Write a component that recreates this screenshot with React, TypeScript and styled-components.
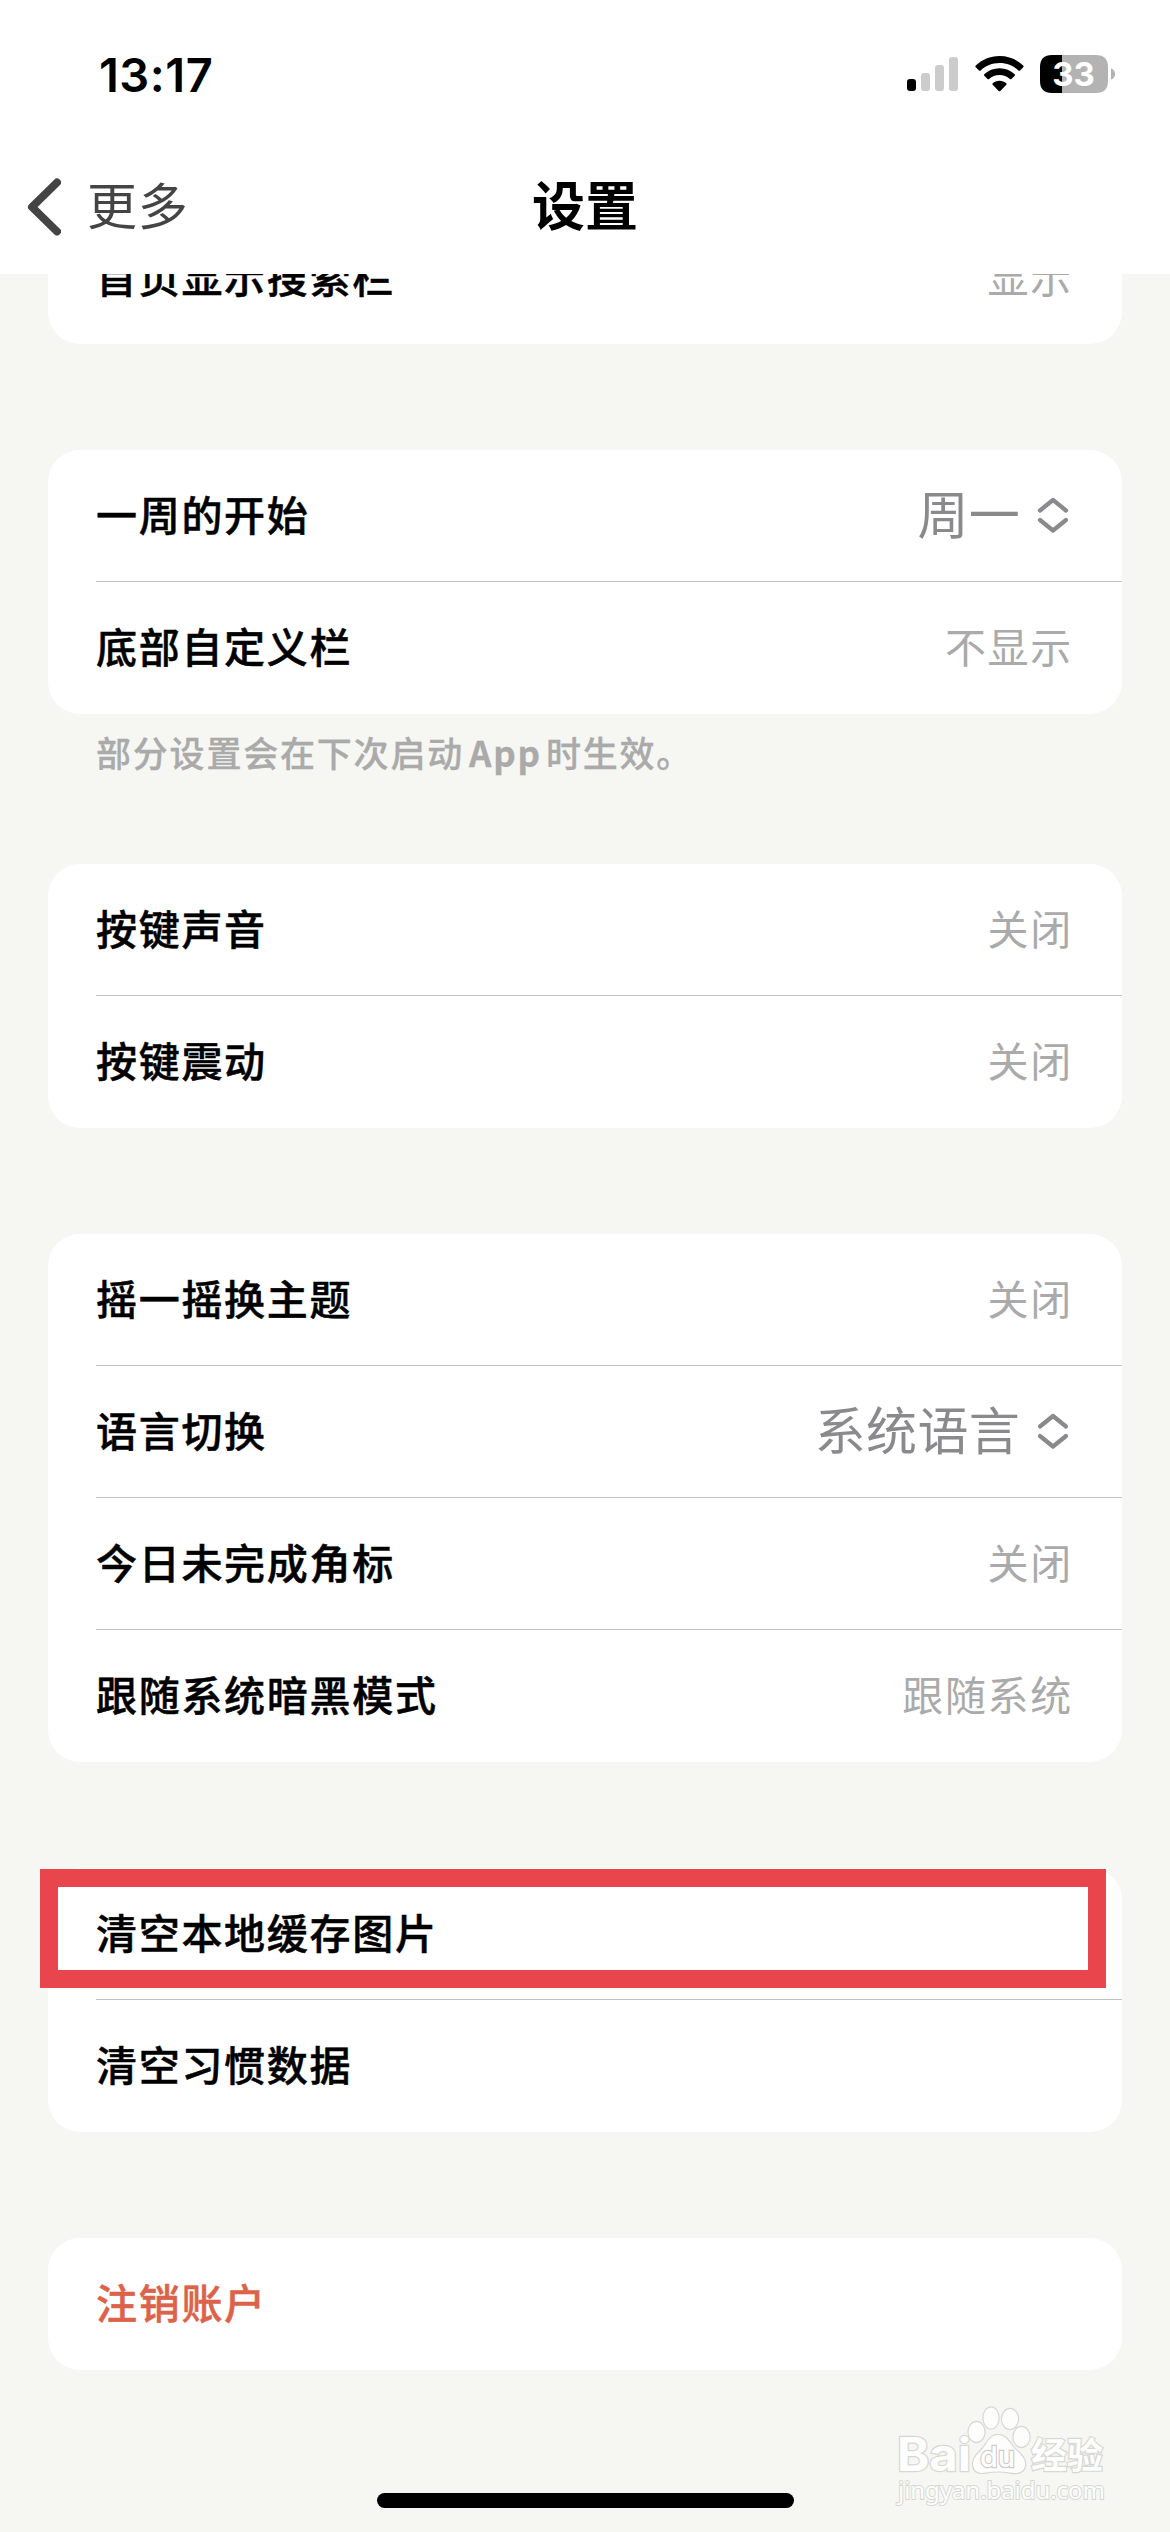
import React from "react";
import styled, { createGlobalStyle } from "styled-components";

const Global = createGlobalStyle`
  body { margin: 0; background: #f6f7f3; }
  * { box-sizing: border-box; }
`;

const Screen = styled.div`
  position: relative;
  width: 1170px;
  height: 2532px;
  overflow: hidden;
  display: flex;
  flex-direction: column;
  background: #f6f7f3;
  color: #000;
  font-family: Inter, "Noto Sans CJK SC", sans-serif;
`;

const Header = styled.header`
  flex: none;
  height: 274px;
  background: #fff;
`;

const StatusBar = styled.div`
  height: 148px;
  padding: 0 54px 0 99px;
  display: flex;
  align-items: center;
  justify-content: space-between;
`;

const Clock = styled.span`
  font-size: 47px;
  font-weight: 600;
  line-height: 60px;
  letter-spacing: 0.5px;
  padding-top: 1px;
`;

const StatusIcons = styled.div`
  display: flex;
  align-items: center;
`;

const NavBar = styled.nav`
  height: 120px;
  padding: 0 27px;
  display: grid;
  grid-template-columns: 1fr auto 1fr;
  align-items: center;
`;

const Back = styled.div`
  display: flex;
  align-items: center;
  gap: 26px;
  color: #444;
  font-size: 50px;
  line-height: 60px;
  letter-spacing: 0.8px;
  padding-bottom: 2px;
`;

const Title = styled.h1`
  margin: 0;
  font-size: 53px;
  line-height: 60px;
  font-weight: 700;
  padding-bottom: 3px;
`;

const List = styled.main`
  flex: 1;
  min-height: 0;
  overflow: hidden;
  padding: 0 48px;
`;

const Card = styled.section<{ $gap?: number; $clipped?: boolean }>`
  background: #fff;
  border-radius: 32px;
  overflow: hidden;
  margin-top: ${(p) => (p.$clipped ? -62 : p.$gap ?? 106)}px;
`;

const Row = styled.div`
  height: 132px;
  padding-left: 48px;
`;

const RowBody = styled.div<{ $line: boolean }>`
  height: 132px;
  padding-right: 49px;
  display: flex;
  align-items: center;
  justify-content: space-between;
  border-bottom: 1px solid ${(p) => (p.$line ? "#c2c2c4" : "transparent")};
`;

const Label = styled.span<{ $danger?: boolean }>`
  font-size: 41px;
  line-height: 60px;
  letter-spacing: 1.7px;
  font-weight: 500;
  padding-top: 1px;
  -webkit-text-stroke: 0.5px currentColor;
  color: ${(p) => (p.$danger ? "#dc6249" : "#000")};
`;

const Value = styled.span<{ $large?: boolean }>`
  display: flex;
  align-items: center;
  gap: 17px;
  padding-top: ${(p) => (p.$large ? 0 : 1)}px;
  margin-right: ${(p) => (p.$large ? 4 : 0)}px;
  font-size: ${(p) => (p.$large ? 51 : 41)}px;
  letter-spacing: ${(p) => (p.$large ? 0.3 : 1.7)}px;
  font-weight: 400;
  line-height: 60px;
  color: ${(p) => (p.$large ? "#8a8a8e" : "#aaa")};
`;

const Note = styled.p`
  margin: 0 0 0 48px;
  height: 150px;
  padding-top: 12px;
  font-size: 35px;
  line-height: 52px;
  letter-spacing: 1.8px;
  font-weight: 500;
  -webkit-text-stroke: 0.3px currentColor;
  color: #aaa;
`;

const NoteLatin = styled.b`
  font-family: "Noto Sans CJK SC", sans-serif;
  font-weight: 700;
  margin: 0 4px 0 5px;
`;

const Highlight = styled.div`
  position: absolute;
  left: 40px;
  top: 1869px;
  width: 1066px;
  height: 119px;
  border: 18px solid #e8464c;
`;

const HomeIndicator = styled.div`
  position: absolute;
  left: 377px;
  bottom: 24px;
  width: 417px;
  height: 15px;
  border-radius: 8px;
  background: #000;
`;

const Watermark = styled.svg`
  position: absolute;
  left: 892px;
  top: 2400px;
`;

const Signal = () => (
  <svg width="51" height="34" viewBox="0 0 51 34">
    <rect x="0" y="22" width="9" height="12" rx="3" fill="#000" />
    <rect x="14" y="16" width="9" height="18" rx="3" fill="#ccc" />
    <rect x="28" y="8" width="9" height="26" rx="3" fill="#ccc" />
    <rect x="42" y="0" width="9" height="34" rx="3" fill="#ccc" />
  </svg>
);

const WifiIcon = styled.svg`
  margin: 0 16px 1px 17px;
`;

const Wifi = () => (
  <WifiIcon width="49" height="36" viewBox="0 0 49 36">
    <path d="M24.5 0C34 0 42 3.600 48.200 9.600Q49 10.400 48.200 11.200L45 14.400Q44.200 15.100 43.400 14.400C38.300 9.700 31.800 7 24.500 7S10.700 9.700 5.600 14.400Q4.800 15.100 4 14.400L.8 11.200Q0 10.400.8 9.600C7 3.600 15 0 24.500 0Z" />
    <path d="M24.500 12.300C30.500 12.300 35.600 14.500 39.700 18.200Q40.500 19 39.700 19.800L36.500 22.900Q35.700 23.600 34.900 22.900C32 20.500 28.600 19.100 24.500 19.100S17 20.500 14.100 22.900Q13.300 23.600 12.500 22.900L9.300 19.800Q8.500 19 9.300 18.200C13.400 14.500 18.500 12.300 24.500 12.300Z" />
    <path d="M24.500 24.800C27.200 24.800 29.500 25.700 31.300 27.200Q32.100 28 31.300 28.800L25.300 34.900Q24.500 35.600 23.700 34.900L17.700 28.800Q16.900 28 17.700 27.200C19.500 25.700 21.800 24.800 24.500 24.800Z" />
  </WifiIcon>
);

const Battery = () => (
  <svg width="76" height="38" viewBox="0 0 76 38">
    <path d="M12 0H22V38H12C4 38 0 34 0 26V12C0 4 4 0 12 0Z" />
    <path d="M22 0H56C64 0 68 4 68 12V26C68 34 64 38 56 38H22Z" fill="#b3b3b3" />
    <path d="M71 13.500C73.500 14.200 75 16.200 75 19S73.500 23.800 71 24.500Z" fill="#b3b3b3" />
    <text x="33.500" y="31" textAnchor="middle" fontFamily="Inter" fontWeight="700" fontSize="33" fill="#fff">33</text>
  </svg>
);

const BackChevron = () => (
  <svg width="34" height="58" viewBox="0 0 34 58">
    <path d="M30 4.500L5 29L30 53.500" fill="none" stroke="#444" strokeWidth="8" strokeLinecap="round" strokeLinejoin="round" />
  </svg>
);

const UpDown = () => (
  <svg width="32" height="38" viewBox="0 0 32 38">
    <path d="M3 13.500L16 3L29 13.500M3 23L16 33.500L29 23" fill="none" stroke="#8a8a8e" strokeWidth="4.200" strokeLinecap="round" strokeLinejoin="round" />
  </svg>
);

type Item = { label: string; value?: string; picker?: boolean; danger?: boolean };

const Group = ({ items, gap, clipped }: { items: Item[]; gap?: number; clipped?: boolean }) => (
  <Card $gap={gap} $clipped={clipped}>
    {items.map((it, i) => (
      <Row key={it.label}>
        <RowBody $line={i < items.length - 1}>
          <Label $danger={it.danger}>{it.label}</Label>
          {it.value && (
            <Value $large={it.picker}>
              {it.value}
              {it.picker && <UpDown />}
            </Value>
          )}
        </RowBody>
      </Row>
    ))}
  </Card>
);

export default function App() {
  return (
    <Screen>
      <Global />
      <Header>
        <StatusBar>
          <Clock>13:17</Clock>
          <StatusIcons>
            <Signal />
            <Wifi />
            <Battery />
          </StatusIcons>
        </StatusBar>
        <NavBar>
          <Back>
            <BackChevron />
            更多
          </Back>
          <Title>设置</Title>
        </NavBar>
      </Header>
      <List>
        <Group clipped items={[{ label: "首页显示搜索栏", value: "显示" }]} />
        <Group
          items={[
            { label: "一周的开始", value: "周一", picker: true },
            { label: "底部自定义栏", value: "不显示" },
          ]}
        />
        <Note>
          部分设置会在下次启动<NoteLatin>App</NoteLatin>时生效。
        </Note>
        <Group
          gap={0}
          items={[
            { label: "按键声音", value: "关闭" },
            { label: "按键震动", value: "关闭" },
          ]}
        />
        <Group
          items={[
            { label: "摇一摇换主题", value: "关闭" },
            { label: "语言切换", value: "系统语言", picker: true },
            { label: "今日未完成角标", value: "关闭" },
            { label: "跟随系统暗黑模式", value: "跟随系统" },
          ]}
        />
        <Group items={[{ label: "清空本地缓存图片" }, { label: "清空习惯数据" }]} />
        <Group items={[{ label: "注销账户", danger: true }]} />
      </List>
      <Highlight />
      <HomeIndicator />
      <Watermark width="224" height="112" viewBox="0 0 224 112">
        <g fill="#fdfdfc" stroke="#d6d7d3" strokeWidth="2.400" paintOrder="stroke">
          <text x="5" y="71" fontFamily="Inter" fontWeight="700" fontSize="46" textLength="74" lengthAdjust="spacingAndGlyphs">Bai</text>
          <ellipse cx="84.500" cy="32" rx="8" ry="10" />
          <ellipse cx="99" cy="18" rx="7.500" ry="10.500" />
          <ellipse cx="118" cy="19" rx="8" ry="10" />
          <ellipse cx="129.500" cy="37" rx="8" ry="10" />
          <path d="M106 35C114 35 117 42 122 48C128 54 134 58 133 66C132 72 126 74 118 72.500C110 71 102 71 94 72.500C86 74 81 71 81 64C81 57 87 53 92 47C96 41 99 35 106 35Z" />
          <text x="88" y="67" fontFamily="Inter" fontWeight="500" fontSize="29" stroke="#cdcecb" textLength="35" lengthAdjust="spacingAndGlyphs">du</text>
          <text x="139" y="69" fontFamily="Noto Sans CJK SC" fontWeight="700" fontSize="36" textLength="72">经验</text>
          <text x="6" y="99" fontFamily="Noto Sans" fontSize="24" strokeWidth="2" textLength="207">jingyan.baidu.com</text>
        </g>
      </Watermark>
    </Screen>
  );
}
